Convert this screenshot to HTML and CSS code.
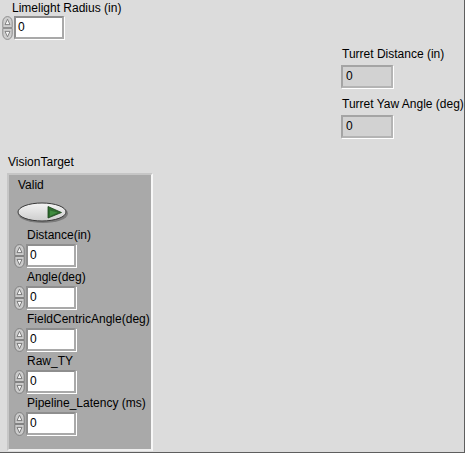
FILE: index.html
```html
<!DOCTYPE html>
<html>
<head>
<meta charset="utf-8">
<link rel="stylesheet" href="styles.css">
</head>
<body>
<div class="panel">
  <div class="top">
    <div class="field limelight">
      <div class="label">Limelight Radius (in)</div>
      <div class="num">
        <svg class="spin" width="11" height="24" viewBox="0 0 11 24"><path d="M0.8 11.6 V5.8 A4.7 5.2 0 0 1 10.2 5.8 V11.6 Z" fill="#cfcfcf" stroke="#8c8c8c"/><path d="M0.8 12.4 V18.2 A4.7 5.2 0 0 0 10.2 18.2 V12.4 Z" fill="#cfcfcf" stroke="#8c8c8c"/><path d="M5.5 3.2 L8 8.6 H3 Z" fill="#f4f4f4" stroke="#7a7a7a" stroke-width="0.9"/><path d="M5.5 20.8 L8 15.4 H3 Z" fill="#f4f4f4" stroke="#7a7a7a" stroke-width="0.9"/></svg>
        <div class="box">0</div>
      </div>
    </div>
    <div class="turret">
      <div class="field">
        <div class="label ind-label">Turret Distance (in)</div>
        <div class="ind">0</div>
      </div>
      <div class="field second">
        <div class="label ind-label">Turret Yaw Angle (deg)</div>
        <div class="ind">0</div>
      </div>
    </div>
  </div>
  <div class="label cluster-label">VisionTarget</div>
  <div class="cluster">
    <div class="label valid-label">Valid</div>
    <svg class="led" width="52" height="23" viewBox="0 0 52 23">
      <defs>
        <linearGradient id="ledg" x1="0" y1="0" x2="0" y2="1">
          <stop offset="0" stop-color="#f4f4f4"/>
          <stop offset="1" stop-color="#cdcdcd"/>
        </linearGradient>
      </defs>
      <ellipse cx="26" cy="12.5" rx="25" ry="9.5" fill="#7c7c7c"/>
      <ellipse cx="25" cy="11" rx="24" ry="9" fill="url(#ledg)" stroke="#3a3a3a"/>
      <polygon points="31,5.5 44.5,11.5 31,17" fill="#2f6c2f" stroke="#1b431b" stroke-width="0.8"/>
      <polygon points="33,9.5 40.5,11.5 33,15" fill="#3f8c3f"/>
    </svg>
    <div class="field item">
      <div class="label">Distance(in)</div>
      <div class="num">
        <svg class="spin" width="11" height="24" viewBox="0 0 11 24"><path d="M0.8 11.6 V5.8 A4.7 5.2 0 0 1 10.2 5.8 V11.6 Z" fill="#cbcbcb" stroke="#7e7e7e"/><path d="M0.8 12.4 V18.2 A4.7 5.2 0 0 0 10.2 18.2 V12.4 Z" fill="#cbcbcb" stroke="#7e7e7e"/><path d="M5.5 3.2 L8 8.6 H3 Z" fill="#f4f4f4" stroke="#707070" stroke-width="0.9"/><path d="M5.5 20.8 L8 15.4 H3 Z" fill="#f4f4f4" stroke="#707070" stroke-width="0.9"/></svg>
        <div class="box">0</div>
      </div>
    </div>
    <div class="field item">
      <div class="label">Angle(deg)</div>
      <div class="num">
        <svg class="spin" width="11" height="24" viewBox="0 0 11 24"><path d="M0.8 11.6 V5.8 A4.7 5.2 0 0 1 10.2 5.8 V11.6 Z" fill="#cbcbcb" stroke="#7e7e7e"/><path d="M0.8 12.4 V18.2 A4.7 5.2 0 0 0 10.2 18.2 V12.4 Z" fill="#cbcbcb" stroke="#7e7e7e"/><path d="M5.5 3.2 L8 8.6 H3 Z" fill="#f4f4f4" stroke="#707070" stroke-width="0.9"/><path d="M5.5 20.8 L8 15.4 H3 Z" fill="#f4f4f4" stroke="#707070" stroke-width="0.9"/></svg>
        <div class="box">0</div>
      </div>
    </div>
    <div class="field item">
      <div class="label">FieldCentricAngle(deg)</div>
      <div class="num">
        <svg class="spin" width="11" height="24" viewBox="0 0 11 24"><path d="M0.8 11.6 V5.8 A4.7 5.2 0 0 1 10.2 5.8 V11.6 Z" fill="#cbcbcb" stroke="#7e7e7e"/><path d="M0.8 12.4 V18.2 A4.7 5.2 0 0 0 10.2 18.2 V12.4 Z" fill="#cbcbcb" stroke="#7e7e7e"/><path d="M5.5 3.2 L8 8.6 H3 Z" fill="#f4f4f4" stroke="#707070" stroke-width="0.9"/><path d="M5.5 20.8 L8 15.4 H3 Z" fill="#f4f4f4" stroke="#707070" stroke-width="0.9"/></svg>
        <div class="box">0</div>
      </div>
    </div>
    <div class="field item">
      <div class="label">Raw_TY</div>
      <div class="num">
        <svg class="spin" width="11" height="24" viewBox="0 0 11 24"><path d="M0.8 11.6 V5.8 A4.7 5.2 0 0 1 10.2 5.8 V11.6 Z" fill="#cbcbcb" stroke="#7e7e7e"/><path d="M0.8 12.4 V18.2 A4.7 5.2 0 0 0 10.2 18.2 V12.4 Z" fill="#cbcbcb" stroke="#7e7e7e"/><path d="M5.5 3.2 L8 8.6 H3 Z" fill="#f4f4f4" stroke="#707070" stroke-width="0.9"/><path d="M5.5 20.8 L8 15.4 H3 Z" fill="#f4f4f4" stroke="#707070" stroke-width="0.9"/></svg>
        <div class="box">0</div>
      </div>
    </div>
    <div class="field item">
      <div class="label">Pipeline_Latency (ms)</div>
      <div class="num">
        <svg class="spin" width="11" height="24" viewBox="0 0 11 24"><path d="M0.8 11.6 V5.8 A4.7 5.2 0 0 1 10.2 5.8 V11.6 Z" fill="#cbcbcb" stroke="#7e7e7e"/><path d="M0.8 12.4 V18.2 A4.7 5.2 0 0 0 10.2 18.2 V12.4 Z" fill="#cbcbcb" stroke="#7e7e7e"/><path d="M5.5 3.2 L8 8.6 H3 Z" fill="#f4f4f4" stroke="#707070" stroke-width="0.9"/><path d="M5.5 20.8 L8 15.4 H3 Z" fill="#f4f4f4" stroke="#707070" stroke-width="0.9"/></svg>
        <div class="box">0</div>
      </div>
    </div>
  </div>
</div>
</body>
</html>
```
FILE: styles.css
```css
html, body {
  margin: 0;
  padding: 0;
}
.panel {
  width: 465px;
  height: 453px;
  box-sizing: border-box;
  background: #dcdcdc;
  border-right: 1px solid #5e5e5e;
  border-bottom: 1px solid #5e5e5e;
  font-family: "Liberation Sans", Arial, sans-serif;
  font-size: 12px;
  color: #000;
  overflow: hidden;
}
.label {
  line-height: 14px;
  height: 14px;
  white-space: nowrap;
}
.top {
  display: grid;
  grid-template-columns: 341px 1fr;
  height: 155px;
}
.limelight {
  padding: 1px 0 0 2px;
}
.limelight .label {
  margin-left: 10px;
}
.num {
  display: flex;
  align-items: flex-start;
  margin-top: 1px;
}
.spin {
  display: block;
  flex: none;
}
.box {
  width: 50px;
  height: 23px;
  box-sizing: border-box;
  background: #fff;
  border: 2px solid #a9a9a9;
  border-top-color: #8e8e8e;
  border-left-color: #8e8e8e;
  box-shadow: 1px 1px 0 #ffffff;
  padding-left: 2px;
  line-height: 19px;
  margin-left: 1px;
}
.turret {
  padding-top: 47px;
}
.ind-label {
  margin-left: 1px;
}
.ind {
  width: 52px;
  height: 23px;
  box-sizing: border-box;
  background: #d2d2d2;
  border: 2px solid #b4b4b4;
  border-top-color: #a4a4a4;
  border-left-color: #a4a4a4;
  box-shadow: 1px 1px 0 #ffffff;
  margin-top: 4px;
  padding-left: 3px;
  line-height: 19px;
}
.second {
  margin-top: 9px;
}
.cluster-label {
  margin-left: 8px;
}
.cluster {
  margin: 4px 0 0 7px;
  width: 146px;
  height: 278px;
  box-sizing: border-box;
  background: #a9a9a9;
  border: 2px solid #c6c6c6;
  border-right-color: #f7f7f7;
  border-bottom-color: #efefef;
  padding: 3px 0 0 5px;
}
.valid-label {
  margin-left: 4px;
}
.led {
  display: block;
  margin: 9px 0 0 3px;
}
.item {
  margin-top: 4px;
}
.item + .item {
  margin-top: 2px;
}
.item .label {
  margin-left: 13px;
}
.item .num {
  margin-top: 2px;
}
```
